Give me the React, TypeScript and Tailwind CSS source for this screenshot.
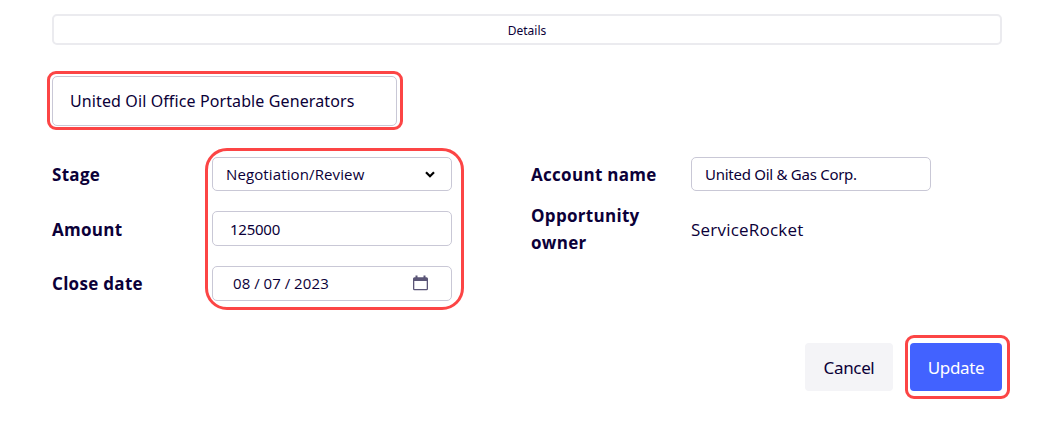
import React from "react";

const field = "w-60 rounded-[5px] border border-[#c9c8d6] bg-white flex items-center whitespace-nowrap";
const label = "w-40 shrink-0 font-bold text-[17px] leading-[27px] tracking-[0.3px]";
const inputFont = "font-['Noto_Sans',sans-serif]";

const Chevron = () => (
  <svg className="ml-auto mr-[16px]" width="10" height="7" viewBox="0 0 10 7" fill="none" stroke="#000" strokeWidth="2.2">
    <path d="M1 1.2 L5 5.2 L9 1.2" />
  </svg>
);

const Calendar = () => (
  <svg className="ml-auto mr-[22px] mb-px" width="17" height="16" viewBox="0 0 17 16" fill="#5b5677">
    <path d="M3.5 0.5h2v1.700h6V0.500h2v1.700h1A1.500 1.500 0 0 1 16 3.700v10a1.500 1.500 0 0 1-1.500 1.500h-12A1.500 1.500 0 0 1 1 13.700v-10A1.500 1.500 0 0 1 2.500 2.200h1z M2.300 6v7.900h12.400V6z" fillRule="evenodd" />
  </svg>
);

const App = () => {
  return (
    <div className="w-[1064px] h-[425px] overflow-hidden bg-white pl-[52px] pr-[62px] pt-[14px] text-[#0b0038] font-['Open_Sans',sans-serif]">
      <div className={`h-[31px] rounded-[5px] border-2 border-[#ebebef] flex items-center justify-center text-[12px] ${inputFont}`}>
        <span className="relative top-px">Details</span>
      </div>

      <div className="relative mt-[31px] w-[345px] h-[50px]">
        <div className={`h-full rounded-[5px] border border-[#c9c8d6] flex items-center pl-[17px] text-[16px] tracking-[0.11px] whitespace-nowrap ${inputFont}`}>
          United Oil Office Portable Generators
        </div>
        <div className="absolute -left-[5px] -top-[5px] w-[356px] h-[59px] rounded-[9px] border-3 border-[#fc4545]" />
      </div>

      <div className="mt-[31px] flex">
        <div className="relative w-[479px]">
          <div className="flex items-center h-[34px]">
            <div className={label}>Stage</div>
            <div className={`${field} h-[34px] pl-[13px] text-[15px] tracking-[0.12px]`}>
              <span>Negotiation/Review</span>
              <Chevron />
            </div>
          </div>
          <div className="mt-5 flex items-center h-[35px]">
            <div className={`${label} pt-0.5`}>Amount</div>
            <div className={`${field} h-[35px] pl-[17px] pt-px text-[15px] tracking-[-0.25px] ${inputFont}`}>125000</div>
          </div>
          <div className="mt-5 flex items-center h-[35px]">
            <div className={label}>Close date</div>
            <div className={`${field} h-[35px] pl-[20px] text-[15px]`}>
              <span className="tracking-[0.15px] [word-spacing:-0.35px]">08 / 07 / 2023</span>
              <Calendar />
            </div>
          </div>
          <div className="absolute left-[153px] -top-[9px] w-[259px] h-[162px] rounded-[22px] border-3 border-[#fc4545]" />
        </div>

        <div>
          <div className="flex items-center h-[34px]">
            <div className={label}>Account name</div>
            <div className={`${field} h-[34px] pl-[13px] text-[15px] tracking-[-0.27px] ${inputFont}`}>United Oil &amp; Gas Corp.</div>
          </div>
          <div className="mt-[11px] flex items-center h-[54px]">
            <div className={label}>Opportunity<br />owner</div>
            <div className="text-[17px] tracking-[0.22px] pt-0.5">ServiceRocket</div>
          </div>
        </div>
      </div>

      <div className="mt-[42px] flex justify-end gap-[17px] text-[17px] tracking-[-0.35px]">
        <button className={`w-[88px] h-12 rounded bg-[#f4f4f7] pt-px ${inputFont}`}>Cancel</button>
        <div className="relative w-[92px] h-12">
          <button className={`w-full h-full rounded bg-[#4262ff] pt-px text-white ${inputFont}`}>Update</button>
          <div className="absolute -left-[5px] -top-[8px] w-[105px] h-[64px] rounded-[9px] border-3 border-[#fc4545]" />
        </div>
      </div>
    </div>
  );
};

export default App;
